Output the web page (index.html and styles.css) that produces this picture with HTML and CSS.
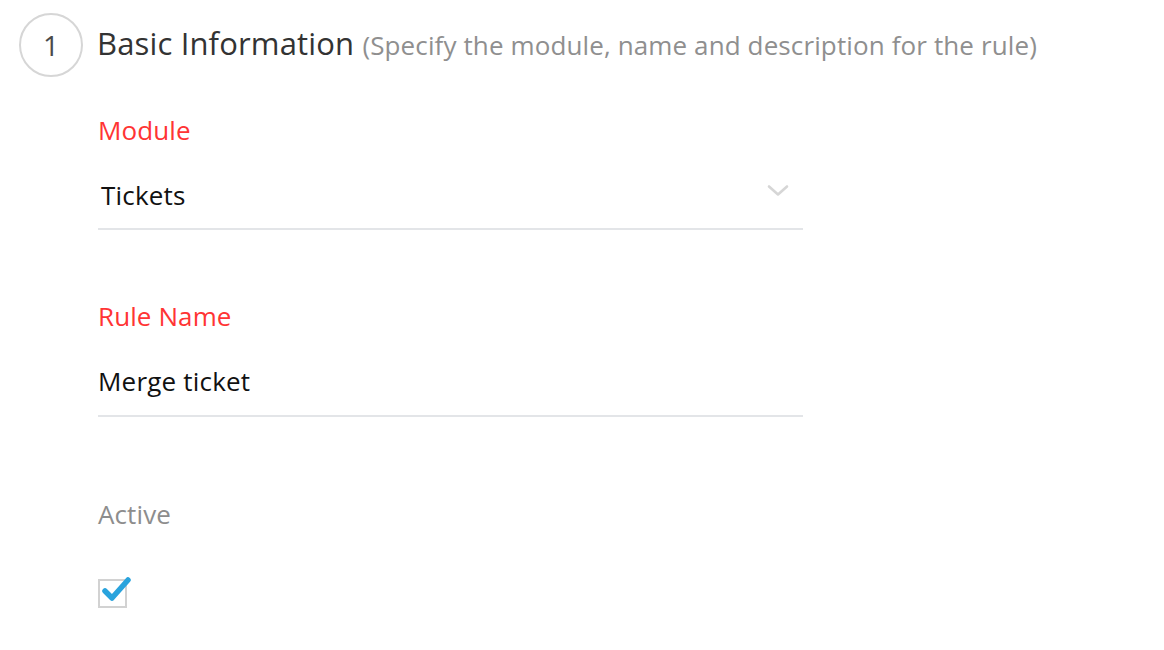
FILE: index.html
```html
<!DOCTYPE html>
<html>
<head>
<meta charset="utf-8">
<link rel="stylesheet" href="styles.css">
</head>
<body>
<div class="section">
  <div class="header">
    <div class="step">1</div>
    <div class="title">Basic Information <span class="sub">(Specify the module, name and description for the rule)</span></div>
  </div>
  <div class="form">
    <div class="field">
      <div class="label req">Module</div>
      <div class="input select">
        <span class="value">Tickets</span>
        <svg class="chev" width="22" height="13" viewBox="0 0 22 13"><path d="M2 2.5 L11 10.5 L20 2.5" fill="none" stroke="#d6d6d6" stroke-width="2.6" stroke-linecap="round" stroke-linejoin="round"/></svg>
      </div>
    </div>
    <div class="field">
      <div class="label req">Rule Name</div>
      <div class="input text"><span class="value">Merge ticket</span></div>
    </div>
    <div class="field active">
      <div class="label muted">Active</div>
      <div class="check">
        <svg width="36" height="34" viewBox="0 0 36 34"><rect x="1" y="6" width="27" height="27" fill="#fff" stroke="#d2d2d2" stroke-width="2"/><path d="M7 17 L14 24 L30 6" fill="none" stroke="#29a3dd" stroke-width="5.5" stroke-linecap="round" stroke-linejoin="round"/></svg>
      </div>
    </div>
  </div>
</div>
</body>
</html>
```
FILE: styles.css
```css
html, body { margin: 0; padding: 0; background: #fff; }
body { font-family: "Open Sans", Lato, sans-serif; width: 1164px; height: 650px; overflow: hidden; }
.section { padding: 13px 0 0 19px; }
.header { display: flex; align-items: center; height: 64px; }
.step {
  width: 60px; height: 60px; border: 2px solid #d6d6d6; border-radius: 50%;
  display: flex; align-items: center; justify-content: center;
  font-size: 28px; line-height: 30px; color: #4a4a4a; flex: none;
}
.title { margin-left: 14px; margin-top: -2px; font-size: 31px; line-height: 40px; color: #333; white-space: nowrap; letter-spacing: 0.15px; }
.sub { font-size: 26px; color: #8f8f8f; letter-spacing: 0.12px; }
.form { margin-left: 79px; width: 705px; padding-top: 36px; }
.field { margin-bottom: 69px; }
.field.active { padding-top: 11px; }
.label { font-size: 26px; line-height: 34px; letter-spacing: 0.1px; }
.req { color: #ff3434; }
.muted { color: #8d8d8d; }
.input {
  display: flex; align-items: center; justify-content: space-between;
  border-bottom: 2px solid #e3e5e8; margin-top: 31px; padding-bottom: 16px;
}
.input.text { padding-bottom: 17px; }
.value { font-size: 26px; line-height: 34px; color: #111; letter-spacing: 0.2px; }
.select .value { padding-left: 3px; }
.chev { margin-right: 14px; margin-top: -10px; }
.check { margin-top: 43px; line-height: 0; }
```
